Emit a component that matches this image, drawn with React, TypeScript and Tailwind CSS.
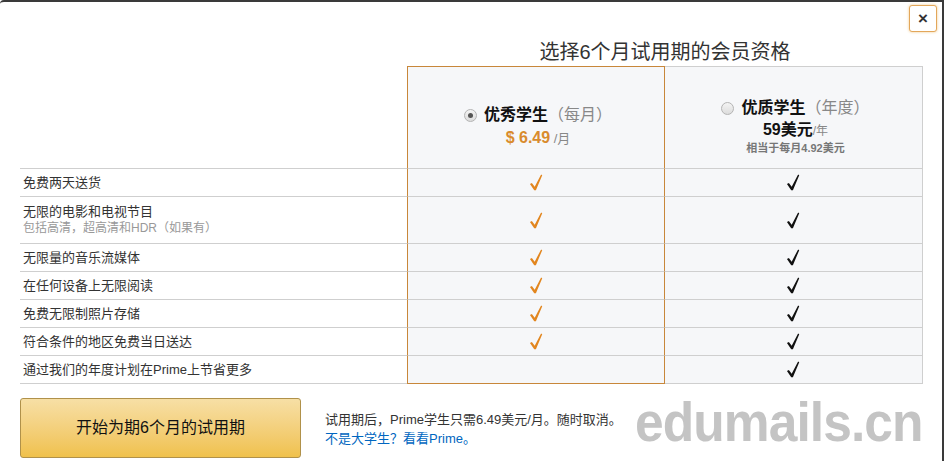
import React from 'react'

const font = "font-['Liberation_Sans','Noto_Sans_CJK_SC',sans-serif]"

const features: { label: string; sub?: string; basic: boolean }[] = [
  { label: '免费两天送货', basic: true },
  { label: '无限的电影和电视节目', sub: '包括高清，超高清和HDR（如果有）', basic: true },
  { label: '无限量的音乐流媒体', basic: true },
  { label: '在任何设备上无限阅读', basic: true },
  { label: '免费无限制照片存储', basic: true },
  { label: '符合条件的地区免费当日送达', basic: true },
  { label: '通过我们的年度计划在Prime上节省更多', basic: false },
]

function Check({ color }: { color: string }) {
  return (
    <svg width="14" height="17" viewBox="0 0 14 18" fill={color}>
      <path d="M0.6 10.6 L2.6 9.4 L5.6 13.4 L12.4 0.4 L13.6 1.2 L6.9 17.2 L5.1 17.2 Z" />
    </svg>
  )
}

function Radio({ checked }: { checked?: boolean }) {
  return (
    <span className="w-[13px] h-[13px] rounded-full border border-[#b4b4b4] bg-gradient-to-b from-[#f4f4f4] to-[#dcdcdc] flex items-center justify-center shrink-0">
      {checked && <span className="w-[5px] h-[5px] rounded-full bg-[#555]" />}
    </span>
  )
}

export default function App() {
  return (
    <div className={`w-[944px] h-[461px] bg-white overflow-hidden border-t-2 border-r-2 border-[#3a3a3a] rounded-tl-[4px] flex flex-col ${font}`}>
      <div className="flex justify-end pr-[5px] pt-[3px]">
        <button className="w-[28px] h-[27px] rounded-[3px] border border-[#e3a75a] bg-white shadow-[0_0_3px_#f0c88a] text-[17px] leading-none text-[#333] font-bold">
          ×
        </button>
      </div>

      <div className="pl-[20px]">
        <div className="grid grid-cols-[387px_258px_258px]">
          <div />
          <div className="col-span-2 h-[24px] mt-[8px] mb-[2px] text-center text-[20px] leading-[24px] text-[#333]">
            选择6个月试用期的会员资格
          </div>

          {/* header */}
          <div className="h-[103px] border-b border-[#cfcfcf]" />
          <div className="h-[103px] bg-[#f6f7f9] border border-[#c8873a] border-b-[#cfcfcf] flex flex-col items-center pt-[37px] pl-[4px]">
            <div className="flex items-center gap-[7px] text-[16px] leading-[22px]">
              <Radio checked />
              <span>
                <span className="font-bold text-[#111]">优秀学生</span>
                <span className="text-[#888]">（每月）</span>
              </span>
            </div>
            <div className="leading-[22px] mt-[1px]">
              <span className="text-[16px] font-bold text-[#d98b2d]">$ 6.49</span>
              <span className="text-[13px] text-[#888]"> /月</span>
            </div>
          </div>
          <div className="h-[103px] bg-[#f6f7f9] border-t border-r border-b border-[#cfcfcf] flex flex-col items-center pt-[30px] pl-[4px]">
            <div className="flex items-center gap-[7px] text-[16px] leading-[22px]">
              <Radio />
              <span>
                <span className="font-bold text-[#111]">优质学生</span>
                <span className="text-[#888]">（年度）</span>
              </span>
            </div>
            <div className="leading-[22px]">
              <span className="text-[16px] font-bold text-[#111]">59美元</span>
              <span className="text-[12px] text-[#888]">/年</span>
            </div>
            <div className="text-[11px] leading-[13px] text-[#777] font-bold">相当于每月4.92美元</div>
          </div>

          {features.map((f, i) => {
            const last = i === features.length - 1
            const h = f.sub ? 'h-[47px]' : 'h-[28px]'
            return (
              <React.Fragment key={f.label}>
                <div className={`${h} border-b border-[#cfcfcf] flex flex-col justify-center pl-[3px] text-[13px] leading-[17px] text-[#333]`}>
                  <div>{f.label}</div>
                  {f.sub && <div className="text-[12px] text-[#999]">{f.sub}</div>}
                </div>
                <div
                  className={`${h} bg-[#f6f7f9] border-x border-b border-x-[#c8873a] ${
                    last ? 'border-b-[#c8873a]' : 'border-b-[#cfcfcf]'
                  } flex items-center justify-center pr-[1px]`}
                >
                  {f.basic && <Check color="#e2861f" />}
                </div>
                <div className={`${h} bg-[#f6f7f9] border-r border-b border-[#cfcfcf] flex items-center justify-center pr-[2px]`}>
                  <Check color="#111" />
                </div>
              </React.Fragment>
            )
          })}
        </div>

        <div className="flex items-center mt-[14px]">
          <button className="w-[281px] h-[60px] shrink-0 rounded-[3px] border border-[#b0914a] bg-gradient-to-b from-[#f7dfa5] to-[#f0c14b] text-[16px] text-[#111]">
            开始为期6个月的试用期
          </button>
          <div className="ml-[24px] shrink-0 whitespace-nowrap text-[13px] leading-[19px] pt-[2px]">
            <div className="text-[#333]">试用期后，Prime学生只需6.49美元/月。随时取消。</div>
            <div className="text-[#0066c0]">不是大学生？看看Prime。</div>
          </div>
          <div className="ml-[13px] -mt-[12px] shrink-0 whitespace-nowrap text-[56px] leading-none font-bold tracking-[-1px] text-[#c4c4c4] origin-left scale-x-[0.92] font-['Liberation_Sans',sans-serif]">
            edumails.cn
          </div>
        </div>
      </div>
    </div>
  )
}
